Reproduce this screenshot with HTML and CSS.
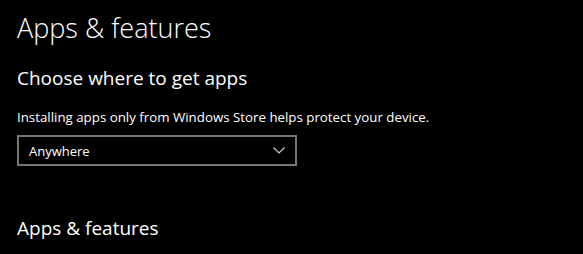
FILE: index.html
```html
<!DOCTYPE html>
<html lang="en">
<head>
  <meta charset="UTF-8">
  <title>Apps &amp; features</title>
  <link rel="stylesheet" href="styles.css">
</head>
<body>

  <h1 class="page-title">Apps &amp; features</h1>

  <h2 class="section-title">Choose where to get apps</h2>
  <p class="hint">Installing apps only from Windows Store helps protect your device.</p>

  <div class="dropdown">
    <span>Anywhere</span>
    <svg class="chevron" width="12" height="7" viewBox="0 0 12 7">
      <path d="M0.5 0.5 L6 6 L11.5 0.5" fill="none" stroke="#cfcfcf" stroke-width="1.2"/>
    </svg>
  </div>

  <h2 class="section-title lower">Apps &amp; features</h2>

</body>
</html>
```

FILE: styles.css
```css
body {
  margin: 0;
  padding: 0 17px;
  background: #000;
  color: #fff;
  font-family: 'Open Sans', sans-serif;
}

.page-title {
  margin: 8px 0 0;
  font-size: 27px;
  font-weight: 300;
  line-height: 40px;
}

.section-title {
  margin: 17px 0 0;
  font-size: 19px;
  font-weight: 400;
  line-height: 26px;
}

.section-title.lower {
  margin-top: 49px;
}

.hint {
  margin: 16px 0 0;
  font-size: 13.3px;
  line-height: 20px;
}

.dropdown {
  display: flex;
  align-items: center;
  justify-content: space-between;
  box-sizing: border-box;
  width: 280px;
  height: 31px;
  margin-top: 8px;
  padding: 0 10px 0 10px;
  border: 2px solid #767676;
  font-size: 13px;
}
```
